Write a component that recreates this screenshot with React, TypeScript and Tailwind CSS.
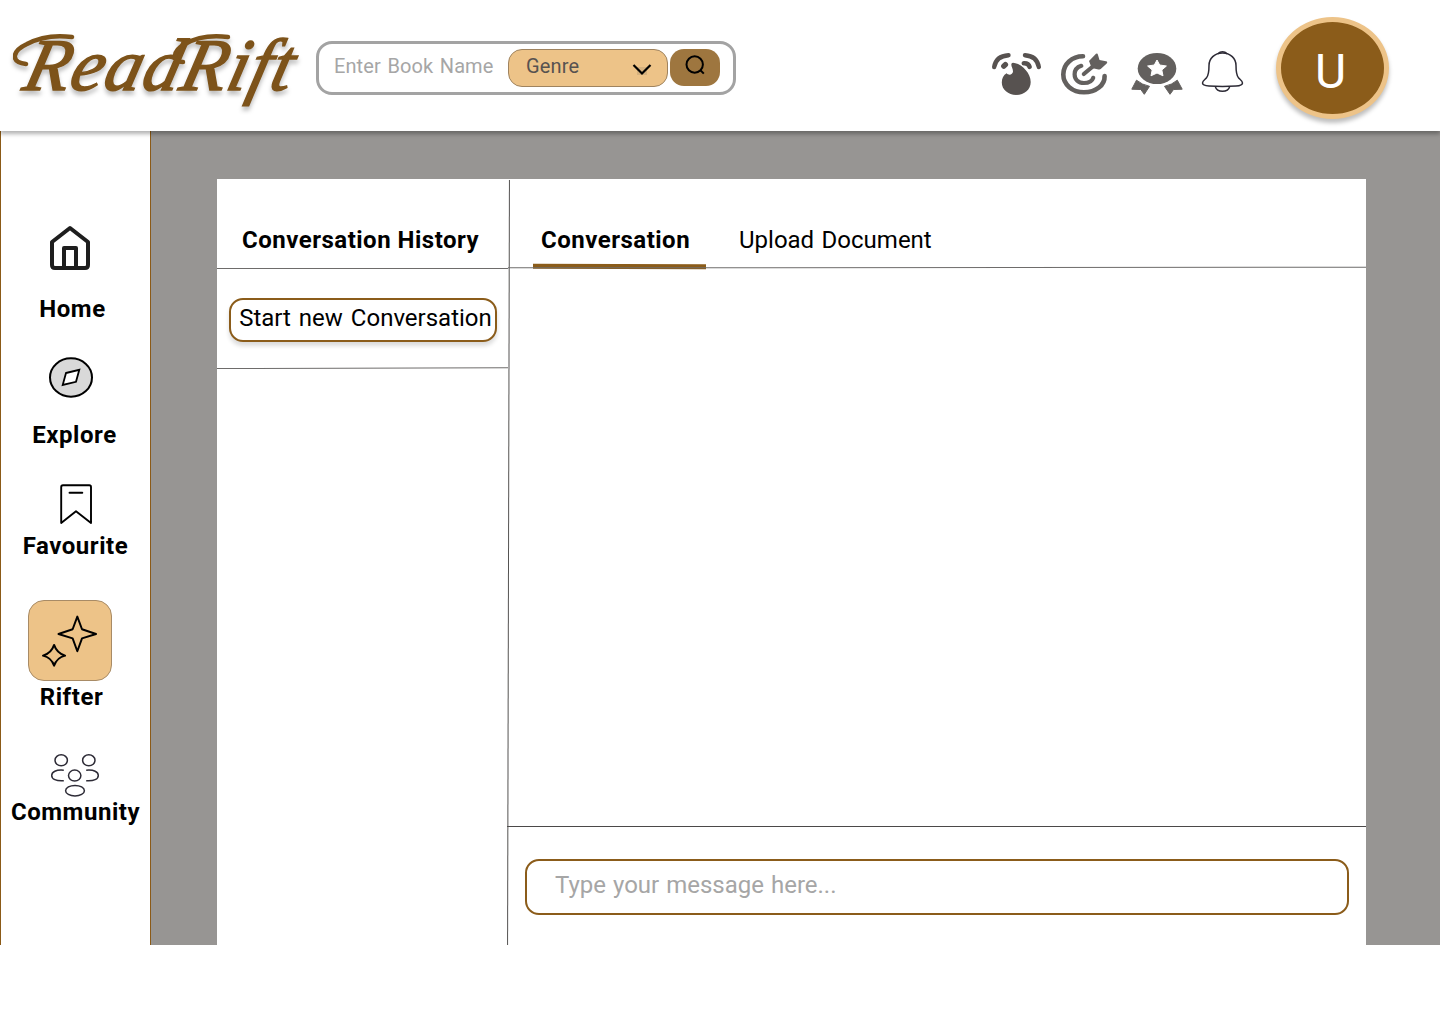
import React from 'react';

function Logo() {
  return (
    <a href="#" className="relative flex h-[72px] w-[288px] items-center drop-shadow-[0_4px_2px_rgba(0,0,0,0.25)]">
      <span className="ml-[14px] block -skew-x-[14deg] whitespace-nowrap font-['Liberation_Serif'] text-[74px] leading-[66px] font-normal tracking-[1.2px] italic text-[#7d531a] [-webkit-text-stroke:1.5px_#7d531a]">
        ReadRift
      </span>
      <svg className="absolute inset-0" width="288" height="72" viewBox="13 30 288 72" fill="none" stroke="#7d531a" strokeWidth="4.5" strokeLinecap="round">
        <path d="M26 65C10 63 12 52 27 45C40 38 57 36 72 38" />
        <path d="M183 63C172 63 172 52 185 45C197 38 212 36 228 38" />
      </svg>
    </a>
  );
}

function SearchBar() {
  return (
    <div className="flex h-[54px] w-[420px] items-start rounded-2xl border-[3px] border-[#a3a3a3] bg-white pt-[5px] pl-[15px]">
      <span className="w-[174px] pt-px text-[20px] leading-[32px] tracking-[0.1px] [word-spacing:1.5px] whitespace-nowrap text-[#a6a6a6]">Enter Book Name</span>
      <button className="flex h-[38px] w-[160px] items-start justify-between rounded-[14px] border border-[#9f835f] bg-[#edc388] pr-[15px] pl-[17px]">
        <span className="text-[20px] leading-[32px] tracking-[0.15px] text-[#575250]">Genre</span>
        <svg className="mt-[13px]" width="20" height="14" viewBox="0 0 20 14" fill="none">
          <path d="M5 4h10v8H5z" fill="#d5b17e" />
          <path d="M1.5 2L10 10.5L18.5 2" stroke="#000" strokeWidth="2.2" />
        </svg>
      </button>
      <button className="ml-0.5 flex h-[37px] w-[50px] justify-center rounded-[14px] bg-[#9e763f] pt-[6px]">
        <svg width="20" height="20" viewBox="0 0 20 20" fill="none" stroke="#000" strokeWidth="2">
          <circle cx="9.7" cy="9.5" r="8.2" />
          <path d="M15.2 15L18.8 18.6" />
        </svg>
      </button>
    </div>
  );
}

function Streak() {
  return (
    <svg width="50" height="44" viewBox="991 52 50 44" fill="none" stroke="#575250" strokeWidth="4.4" strokeLinecap="round">
      <path d="M994.2 67Q996 56 1008.5 55.2" />
      <path d="M1025 55.2Q1037 56 1038.8 67" />
      <path d="M1003.8 66.2L1005.4 64.6" strokeWidth="5.4" />
      <path d="M1023.8 63.2Q1028.5 63 1029.6 66.8" strokeWidth="4.6" />
      <path stroke="none" fill="#575250" d="M1013 62.8C1020 63 1030.7 72 1030.7 82C1030.7 89.5 1024.5 94.9 1016.3 94.9S1001.8 89.5 1001.8 82.5C1001.8 78 1003.5 75 1006.7 73.2C1008.5 75.7 1012.8 74.8 1013 71.5C1013 68.5 1011.3 67 1011.3 64.5Q1011.3 62.8 1013 62.8Z" />
    </svg>
  );
}

function Goal() {
  return (
    <svg width="48" height="44" viewBox="1060 52 48 44" fill="none" stroke="#63605e" strokeWidth="4.6" strokeLinecap="round">
      <path d="M1083 56.3C1072 56.3 1063.3 64.2 1063.3 74.5C1063.3 84.5 1072.3 92.3 1084 92.3C1096 92.3 1105 85 1104.6 76" />
      <path d="M1081.3 65.8C1077.5 67 1074.6 70 1074.6 74.3C1074.6 79.5 1078.5 83 1084 83C1089 83 1092.3 80.5 1093.2 77.8" strokeWidth="4.2" />
      <path d="M1083.8 74L1094 65.5" strokeWidth="4.2" />
      <path stroke="none" fill="#63605e" d="M1089 61L1096 53.8Q1097.6 53 1098 55L1099.5 60L1106 61.2Q1108 61.8 1106.7 63.5L1100.7 69Q1100 69.7 1098.5 69.4L1091.7 68Z" />
    </svg>
  );
}

function Medal() {
  return (
    <svg width="54" height="44" viewBox="1130 52 54 44" fill="#63605e">
      <ellipse cx="1157" cy="68.5" rx="19.3" ry="15.6" />
      <path fill="#fff" stroke="#fff" strokeLinejoin="round" d="M1157 60L1159.7 65L1166.4 66L1161.8 70L1163 75.8L1157 73L1151 75.8L1152.2 70L1147.6 66L1154.3 65Z" />
      <path stroke="#63605e" strokeLinejoin="round" d="M1136.5 80.2Q1142 84.8 1149.5 86.3L1144.3 94.3L1140.8 89.5L1131.8 89.2Z" />
      <path stroke="#63605e" strokeLinejoin="round" d="M1177.3 80.2Q1172 84.8 1164.5 86.3L1170 94.3L1173.5 89.5L1182.2 89.2Z" />
    </svg>
  );
}

function Bell() {
  return (
    <svg width="44" height="44" viewBox="1201 50 44 44" fill="none" stroke="#2d2b36" strokeWidth="1.5">
      <path d="M1222.5 53C1214.5 53 1209 58.5 1209 65.5C1209 72 1208.8 75 1206.5 77.8C1205 79.5 1202.5 80.8 1202.5 83C1202.5 85.3 1205.5 85.8 1209 86.1Q1222.5 87 1236 86.1C1239.5 85.8 1242.5 85.3 1242.5 83C1242.5 80.8 1240 79.5 1238.5 77.8C1236.2 75 1236 72 1236 65.5C1236 58.5 1230.5 53 1222.5 53Z" />
      <path d="M1217.5 54Q1222.5 49.5 1227.5 54M1215.3 86.6C1217 92.8 1228 92.8 1229.7 86.6" />
    </svg>
  );
}

function Header() {
  return (
    <header className="relative z-10 flex h-[131px] items-start bg-white shadow-[0_3px_4px_rgba(0,0,0,0.3)]">
      <div className="pt-[29px] pl-[13px]"><Logo /></div>
      <div className="pt-[41px] pl-[15px]"><SearchBar /></div>
      <div className="ml-auto flex items-start pr-[51px]">
        <div className="mt-[52px] mr-[19px]"><Streak /></div>
        <div className="mt-[52px] mr-[22px]"><Goal /></div>
        <div className="mt-[52px] mr-[17px]"><Medal /></div>
        <div className="mt-[50px] mr-[31px]"><Bell /></div>
        <div className="mt-[17px] flex h-[102px] w-[113px] items-center justify-center rounded-[50%] border-[5px] border-[#edc388] bg-[#8b5c1a] pr-1 text-[48px] leading-none text-white shadow-[0_4px_4px_rgba(0,0,0,0.25)]">
          <span className="pt-2">U</span>
        </div>
      </div>
    </header>
  );
}

const navLabel = 'text-center text-[24px] leading-7 font-bold tracking-[0.55px] whitespace-nowrap';

function Sidebar() {
  return (
    <nav className="flex w-[151px] shrink-0 flex-col items-center border-x border-[#8b5a17] bg-white">
      <a href="#" className="mt-[94px] flex flex-col items-center">
        <svg className="-translate-x-[5px]" width="44" height="46" viewBox="49 225 44 46" fill="none" stroke="#1e1e1e" strokeWidth="4" strokeLinejoin="round">
          <path d="M53 242L71 228L89 242V265Q89 268 86 268H56Q53 268 53 265Z" />
          <path d="M65 268V248H77V268" />
        </svg>
        <span className={`mt-6 -translate-x-[3px] ${navLabel}`}>Home</span>
      </a>
      <a href="#" className="mt-[33px] flex flex-col items-center">
        <svg className="-translate-x-[5px]" width="46" height="42" viewBox="48 356 46 42" fill="#d9d9d9" stroke="#000" strokeWidth="2">
          <ellipse cx="71" cy="377.5" rx="21" ry="19.2" />
          <path fill="#fff" strokeWidth="1.8" d="M66 373L79.3 369.8L76 381.8L62.7 385Z" />
        </svg>
        <span className={`mt-[23px] -translate-x-px ${navLabel}`}>Explore</span>
      </a>
      <a href="#" className="mt-[34px] flex flex-col items-center">
        <svg width="34" height="42" viewBox="58 483 34 42" fill="none" stroke="#000" strokeWidth="1.9" strokeLinejoin="round" strokeLinecap="round">
          <path d="M60.2 523V487Q60.2 485.3 62 485.3H88.3Q90 485.3 90 487V523L75 511.3Z" />
          <path d="M68.5 492.7H81.3" />
        </svg>
        <span className={`mt-[7px] ${navLabel}`}>Favourite</span>
      </a>
      <a href="#" className="mt-10 flex flex-col items-center">
        <span className="flex h-[81px] w-[84px] -translate-x-[6px] items-center justify-center rounded-2xl border border-[#a88b66] bg-[#edc388]">
          <svg width="84" height="81" viewBox="28 600 84 81" fill="none" stroke="#000" strokeWidth="2" strokeLinejoin="round">
            <path d="M77.5 616L82.3 629L96.7 633.8L82.3 638.3L77.5 651.5L72.7 638.3L58.2 633.8L72.7 629Z" />
            <path d="M53.7 645Q56.5 653.5 65 656Q56.5 658 53.7 666.3Q51 658 42.3 656Q51 653.5 53.7 645Z" />
          </svg>
        </span>
        <span className={`mt-0.5 -translate-x-[4px] ${navLabel}`}>Rifter</span>
      </a>
      <a href="#" className="mt-[42px] flex flex-col items-center">
        <svg width="50" height="44" viewBox="50 753 50 44" fill="none" stroke="#2d2b36" strokeWidth="1.5">
          <ellipse cx="61.2" cy="760.3" rx="6.2" ry="5.5" />
          <ellipse cx="88.8" cy="760.3" rx="6.2" ry="5.5" />
          <ellipse cx="74.7" cy="775.6" rx="6.2" ry="5.5" />
          <ellipse cx="75" cy="790.7" rx="9.4" ry="5.3" />
          <path d="M63.8 770.2C56 769.5 51.7 771.8 51.7 775.5S56 781.2 63.8 780.7M86.2 770.2C94 769.5 98.3 771.8 98.3 775.5S94 781.2 86.2 780.7" />
        </svg>
        <span className={`mt-px ${navLabel}`}>Community</span>
      </a>
    </nav>
  );
}

function HistoryPanel() {
  return (
    <aside className="flex w-[291px] shrink-0 flex-col">
      <h2 className="h-[89px] pt-[47px] pl-[25px] text-[24px] leading-7 font-bold tracking-[0.5px] whitespace-nowrap">Conversation History</h2>
      <div className="h-px shrink-0 bg-[#6e6c6b]" />
      <div className="flex h-[99px] items-start pt-[29px] pl-3">
        <button className="h-11 w-[268px] shrink-0 rounded-[14px] border-2 border-[#8b5c1a] bg-white pb-1 pl-[5px] text-[24px] leading-7 [word-spacing:2px] whitespace-nowrap shadow-[0_4px_4px_rgba(0,0,0,0.14)]">Start new Conversation</button>
      </div>
      <div className="h-px shrink-0 origin-left -rotate-[0.15deg] bg-[#6e6c6b]" />
    </aside>
  );
}

function ConversationPanel() {
  return (
    <section className="flex min-w-0 grow flex-col">
      <div className="flex h-[88px] items-start pl-[25px]">
        <button className="relative h-[91px] w-[173px] pt-[47px] pl-[8px] text-left text-[24px] leading-7 font-bold tracking-[0.5px]">
          <span className="block h-full">Conversation</span>
          <span className="absolute bottom-px left-0 h-[5px] w-full rotate-[0.2deg] bg-[#8b5c1a]" />
        </button>
        <button className="pt-[47px] pl-[33px] text-[24px] leading-7 [word-spacing:1.5px]">Upload Document</button>
      </div>
      <div className="h-px shrink-0 -rotate-[0.05deg] bg-[#6e6c6b]" />
      <div className="grow" />
      <div className="-ml-px h-px shrink-0 bg-[#4b4949]" />
      <div className="h-[118px] shrink-0 pt-8 pr-[17px] pl-[17px]">
        <div className="h-14 rounded-[14px] border-2 border-[#8b5c1a] pt-[10px] pl-7 text-[24px] leading-7 [word-spacing:1px] text-[#a6a6a6]">Type your message here...</div>
      </div>
    </section>
  );
}

export default function App() {
  return (
    <div className="flex h-screen flex-col bg-white font-['Roboto',sans-serif] text-black">
      <Header />
      <div className="flex h-[814px]">
        <Sidebar />
        <main className="flex grow items-stretch overflow-hidden bg-[#979593] pt-12 pr-[74px] pl-[66px]">
          <div className="flex w-full bg-white">
            <HistoryPanel />
            <div className="mt-px w-px shrink-0 rotate-[0.14deg] bg-[#555352]" />
            <div className="-ml-px flex min-w-0 grow">
              <ConversationPanel />
            </div>
          </div>
        </main>
      </div>
    </div>
  );
}
